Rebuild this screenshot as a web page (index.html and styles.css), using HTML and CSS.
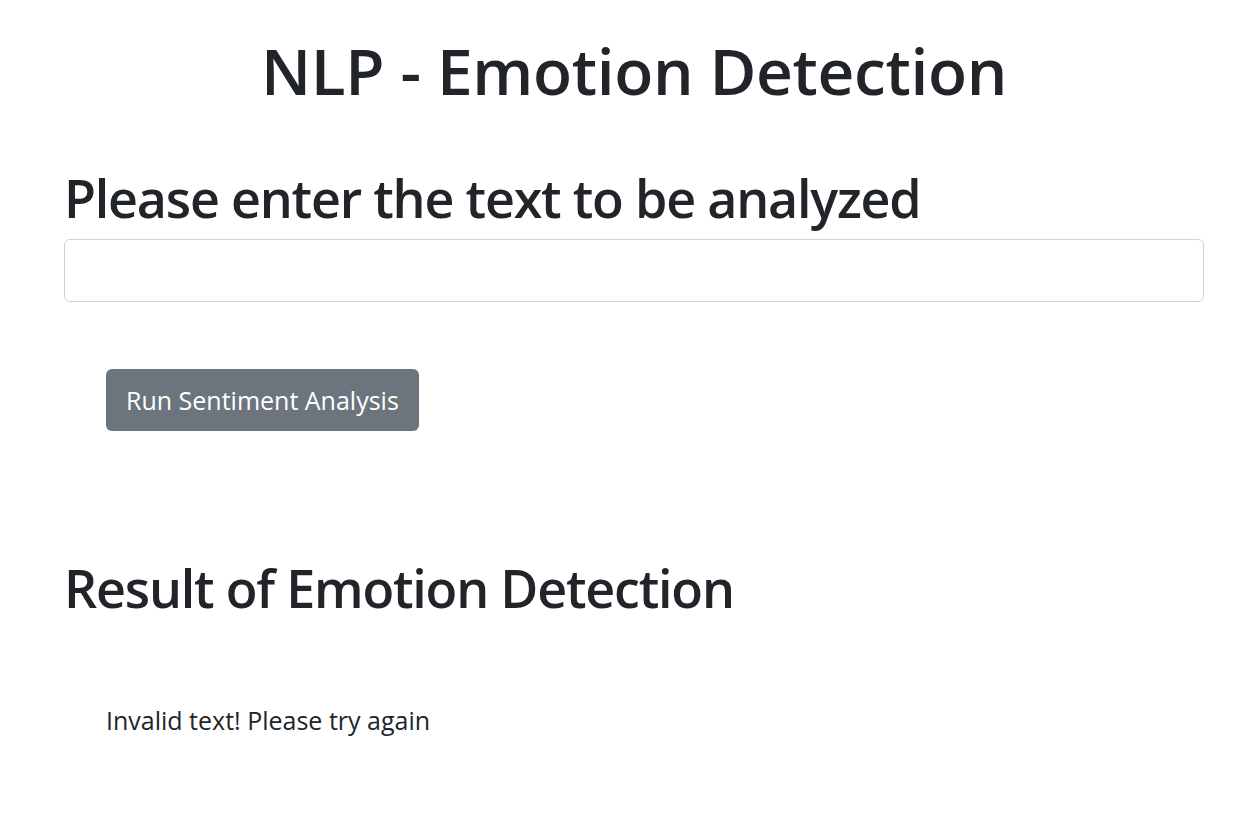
FILE: index.html
```html
<!DOCTYPE html>
<html lang="en">
<head>
<meta charset="utf-8">
<title>NLP - Emotion Detection</title>
<link rel="stylesheet" href="styles.css">
</head>
<body>
<div class="container">
  <h1 class="title">NLP - Emotion Detection</h1>
  <h2 class="heading heading-input">Please enter the text to be analyzed</h2>
  <input class="text-input" type="text" id="textToAnalyze">
  <div class="actions">
    <button class="btn" type="button">Run Sentiment Analysis</button>
  </div>
  <h2 class="heading heading-result">Result of Emotion Detection</h2>
  <div class="result">Invalid text! Please try again</div>
</div>
</body>
</html>
```
FILE: styles.css
```css
html, body {
  margin: 0;
  padding: 0;
  background: #fff;
}
body {
  font-family: "Open Sans", "Noto Sans", sans-serif;
  color: #212529;
}
.container {
  padding: 0 50px 0 64px;
}
.title {
  margin: 33px 0 0;
  font-size: 64px;
  font-weight: 600;
  line-height: 1.2;
  letter-spacing: -0.35px;
  text-align: center;
}
.heading {
  font-size: 52px;
  font-weight: 600;
  line-height: 1.2;
  letter-spacing: -1.2px;
  margin: 0;
}
.heading-input {
  margin-top: 57px;
}
.text-input {
  display: block;
  box-sizing: border-box;
  width: 100%;
  height: 63px;
  margin: 10px 0 0;
  border: 1px solid #ced4da;
  border-radius: 6px;
  font-size: 25px;
  padding: 8px 16px;
}
.actions {
  padding: 67px 0 0 42px;
}
.btn {
  height: 62px;
  padding: 0 20px;
  border: none;
  border-radius: 6px;
  background: #6c757d;
  color: #fff;
  font-family: inherit;
  font-size: 25px;
}
.heading-result {
  margin-top: 126px;
}
.result {
  padding: 82px 0 0 42px;
  font-size: 25px;
  line-height: 1.5;
}
```
